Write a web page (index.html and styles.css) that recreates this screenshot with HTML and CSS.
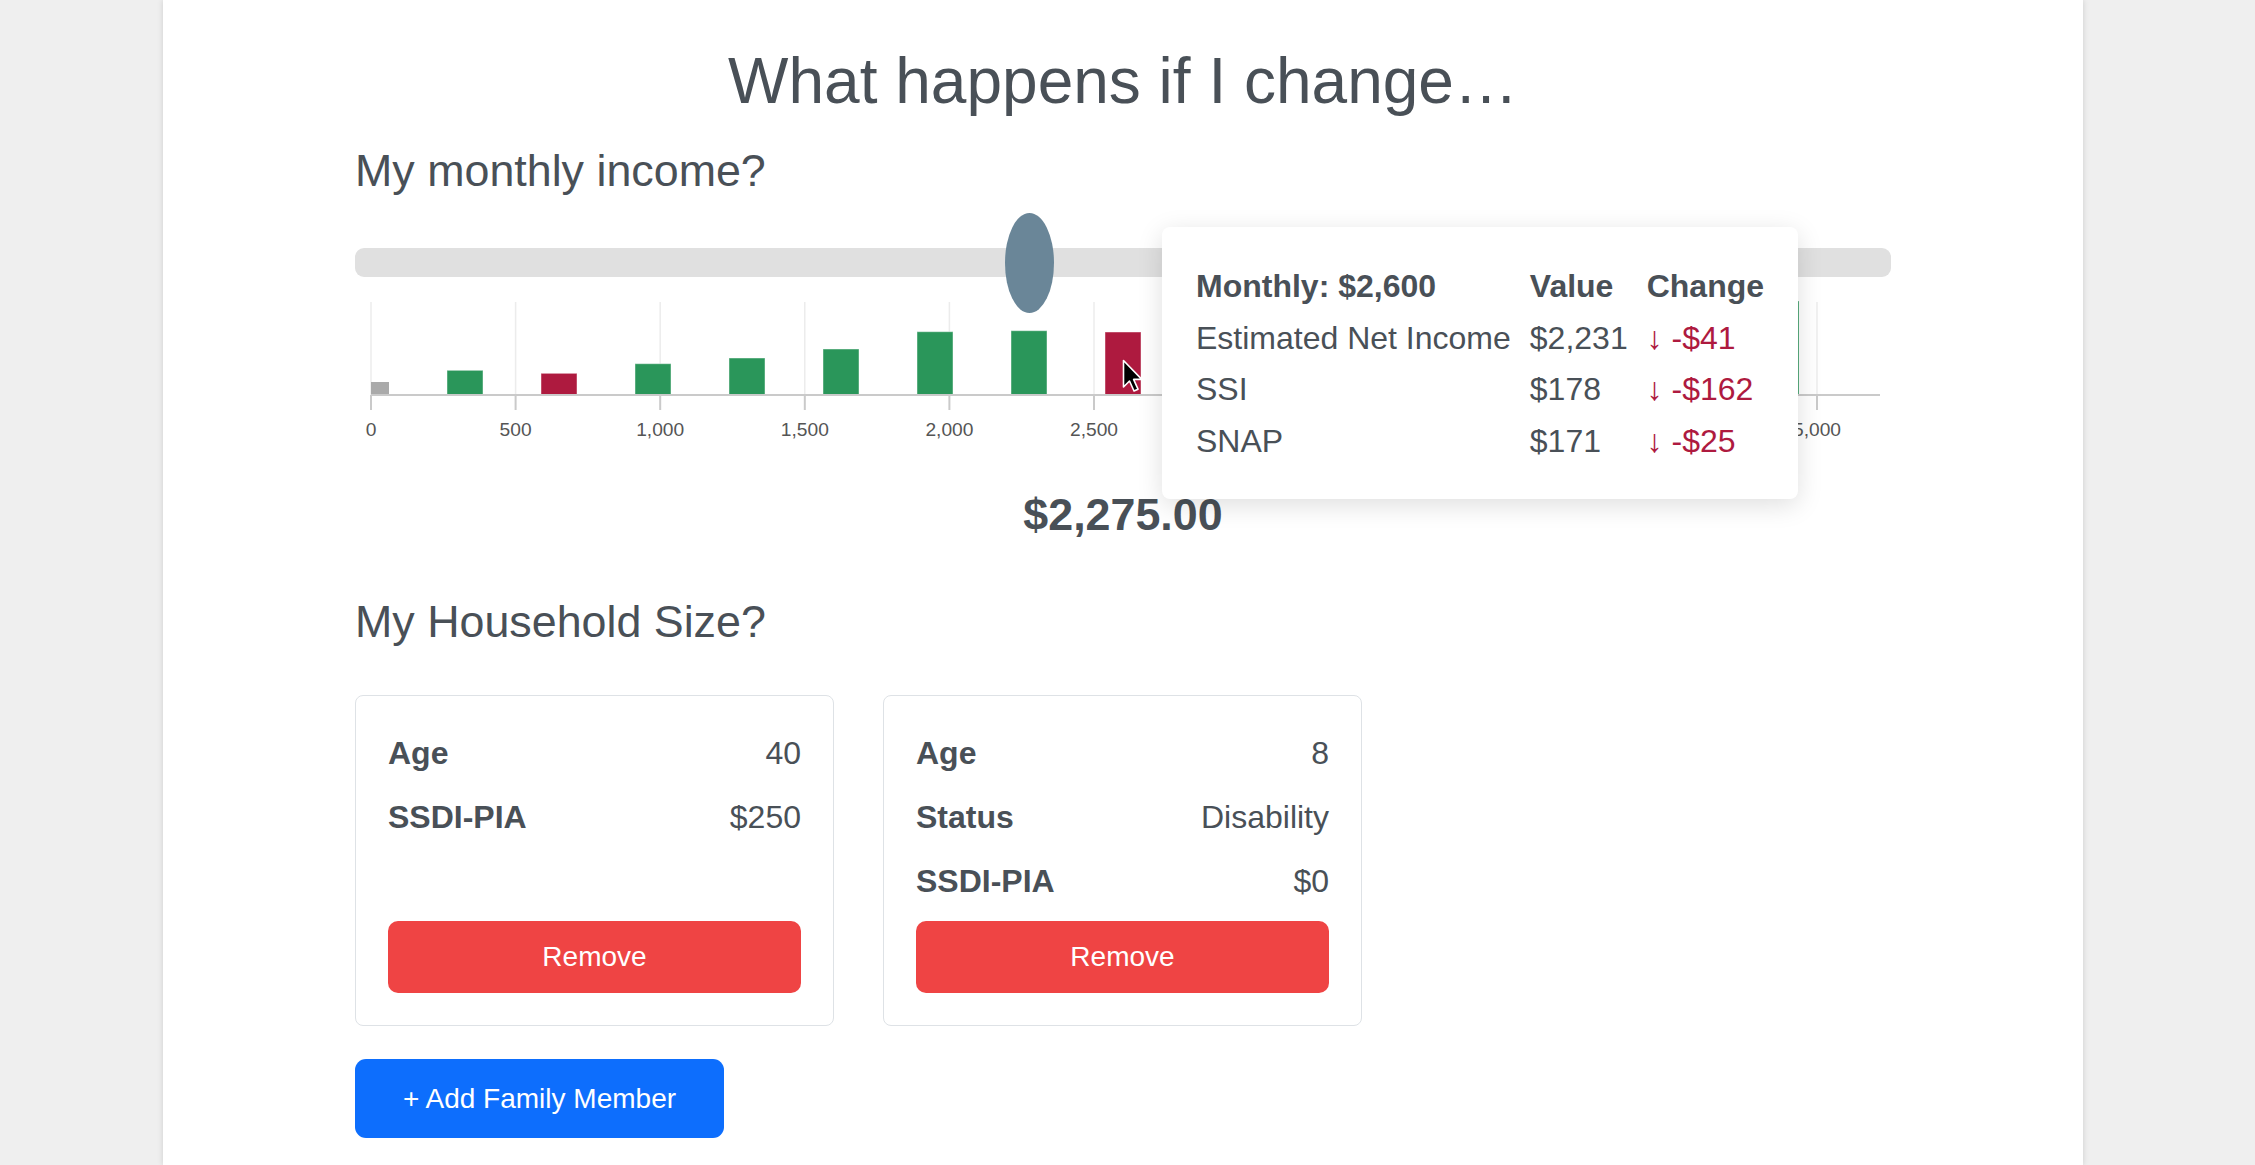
FILE: index.html
```html
<!DOCTYPE html>
<html lang="en">
<head>
<meta charset="utf-8">
<title>What happens if I change…</title>
<link rel="stylesheet" href="styles.css">
</head>
<body>
<main class="page">
  <h1 class="title">What happens if I change…</h1>

  <section class="income">
    <h2 class="section-title">My monthly income?</h2>
    <div class="widget">
      <div class="track"></div>
      <div class="thumb" style="left: 649.5px"></div>
      <svg class="chart" viewBox="0 0 1536 160" width="1536" height="160">
        <g class="grid">
          <line x1="16" y1="12" x2="16" y2="105"/>
          <line x1="160.6" y1="12" x2="160.6" y2="105"/>
          <line x1="305.2" y1="12" x2="305.2" y2="105"/>
          <line x1="449.8" y1="12" x2="449.8" y2="105"/>
          <line x1="594.4" y1="12" x2="594.4" y2="105"/>
          <line x1="739" y1="12" x2="739" y2="105"/>
          <line x1="883.6" y1="12" x2="883.6" y2="105"/>
          <line x1="1028.2" y1="12" x2="1028.2" y2="105"/>
          <line x1="1172.8" y1="12" x2="1172.8" y2="105"/>
          <line x1="1317.4" y1="12" x2="1317.4" y2="105"/>
          <line x1="1462" y1="12" x2="1462" y2="105"/>
        </g>
        <g class="ticks">
          <line x1="16" y1="105" x2="16" y2="120"/>
          <line x1="160.6" y1="105" x2="160.6" y2="120"/>
          <line x1="305.2" y1="105" x2="305.2" y2="120"/>
          <line x1="449.8" y1="105" x2="449.8" y2="120"/>
          <line x1="594.4" y1="105" x2="594.4" y2="120"/>
          <line x1="739" y1="105" x2="739" y2="120"/>
          <line x1="883.6" y1="105" x2="883.6" y2="120"/>
          <line x1="1028.2" y1="105" x2="1028.2" y2="120"/>
          <line x1="1172.8" y1="105" x2="1172.8" y2="120"/>
          <line x1="1317.4" y1="105" x2="1317.4" y2="120"/>
          <line x1="1462" y1="105" x2="1462" y2="120"/>
        </g>
        <g class="bars">
          <rect class="bar-none" x="16" y="92" width="18" height="13"/>
          <rect class="bar-up" x="92" y="80.3" width="36" height="24.7"/>
          <rect class="bar-down" x="186" y="83.3" width="36" height="21.7"/>
          <rect class="bar-up" x="280" y="73.7" width="36" height="31.3"/>
          <rect class="bar-up" x="374" y="68" width="36" height="37"/>
          <rect class="bar-up" x="468" y="59" width="36" height="46"/>
          <rect class="bar-up" x="562" y="41.7" width="36" height="63.3"/>
          <rect class="bar-up" x="656" y="40.7" width="36" height="64.3"/>
          <rect class="bar-down" x="750" y="42" width="36" height="63"/>
          <rect class="bar-up" x="844" y="35" width="36" height="70"/>
          <rect class="bar-up" x="938" y="31" width="36" height="74"/>
          <rect class="bar-up" x="1032" y="27" width="36" height="78"/>
          <rect class="bar-up" x="1126" y="23" width="36" height="82"/>
          <rect class="bar-up" x="1220" y="19" width="36" height="86"/>
          <rect class="bar-up" x="1314" y="15" width="36" height="90"/>
          <rect class="bar-up" x="1408" y="11" width="36" height="94"/>
        </g>
        <line class="axis" x1="16" y1="105" x2="1525" y2="105"/>
        <g class="labels">
          <text x="16" y="145.5">0</text>
          <text x="160.6" y="145.5">500</text>
          <text x="305.2" y="145.5">1,000</text>
          <text x="449.8" y="145.5">1,500</text>
          <text x="594.4" y="145.5">2,000</text>
          <text x="739" y="145.5">2,500</text>
          <text x="1462" y="145.5">5,000</text>
        </g>
      </svg>

      <div class="tooltip">
        <table class="tip-table">
          <thead>
            <tr><th>Monthly: $2,600</th><th>Value</th><th>Change</th></tr>
          </thead>
          <tbody>
            <tr><td>Estimated Net Income</td><td>$2,231</td><td class="down"><span class="arrow">↓</span> -$41</td></tr>
            <tr><td>SSI</td><td>$178</td><td class="down"><span class="arrow">↓</span> -$162</td></tr>
            <tr><td>SNAP</td><td>$171</td><td class="down"><span class="arrow">↓</span> -$25</td></tr>
          </tbody>
        </table>
      </div>

      <svg class="cursor" viewBox="0 0 24 36" width="24" height="36">
        <path d="M1.5 1.5 L1.5 28 L7.5 22 L12 32 L16 30.2 L11.6 20.4 L19.8 20.4 Z" fill="#000" stroke="#fff" stroke-width="1.6" stroke-linejoin="round"/>
      </svg>
    </div>
    <div class="income-value">$2,275.00</div>
  </section>

  <section class="household">
    <h2 class="section-title">My Household Size?</h2>
    <div class="members">
      <div class="member-card">
        <div class="member-row"><span class="label">Age</span><span class="value">40</span></div>
        <div class="member-row"><span class="label">SSDI-PIA</span><span class="value">$250</span></div>
        <button class="btn-remove" type="button">Remove</button>
      </div>
      <div class="member-card">
        <div class="member-row"><span class="label">Age</span><span class="value">8</span></div>
        <div class="member-row"><span class="label">Status</span><span class="value">Disability</span></div>
        <div class="member-row"><span class="label">SSDI-PIA</span><span class="value">$0</span></div>
        <button class="btn-remove" type="button">Remove</button>
      </div>
    </div>
    <button class="btn-add" type="button">+ Add Family Member</button>
  </section>
</main>
</body>
</html>
```

FILE: styles.css
```css
* {
  box-sizing: border-box;
}

html,
body {
  margin: 0;
  padding: 0;
}

body {
  background: #efefef;
  font-family: "Liberation Sans", Arial, Helvetica, sans-serif;
  color: #495057;
}

.page {
  width: 1920px;
  min-height: 1165px;
  margin-left: 163px;
  padding: 43px 192px 27px;
  background: #fff;
  box-shadow: 0 0 6px rgba(0, 0, 0, 0.14);
}

.title {
  margin: 0 0 23px;
  font-size: 64px;
  line-height: 77px;
  font-weight: 400;
  text-align: center;
}

.section-title {
  margin: 0;
  font-size: 44.8px;
  line-height: 54px;
  font-weight: 400;
}

/* ---------- income slider + chart ---------- */

.widget {
  position: relative;
  padding-top: 51px;
}

.track {
  height: 29px;
  border-radius: 9px;
  background: #e0e0e0;
}

.thumb {
  position: absolute;
  top: 15.7px;
  width: 49px;
  height: 100px;
  border-radius: 50%;
  background: #6a8698;
}

.chart {
  display: block;
  margin-top: 13px;
  width: 1536px;
  height: 160px;
}

.chart .grid line {
  stroke: #ececec;
  stroke-width: 1.5;
}

.chart .ticks line {
  stroke: #cacaca;
  stroke-width: 2;
}

.chart .axis {
  stroke: #cacaca;
  stroke-width: 2;
}

.chart .bar-up {
  fill: #2a965a;
  stroke: rgba(255, 255, 255, 0.45);
  stroke-width: 1;
}

.chart .bar-down {
  fill: #ae1a3f;
  stroke: rgba(255, 255, 255, 0.45);
  stroke-width: 1;
}

.chart .bar-none {
  fill: #aaaaaa;
}

.chart .labels text {
  font-family: "Liberation Sans", Arial, sans-serif;
  font-size: 19.2px;
  fill: #555;
  text-anchor: middle;
}

.tooltip {
  position: absolute;
  top: 30px;
  left: 807px;
  padding: 34px 24.5px 32px;
  background: #fff;
  border-radius: 8px;
  box-shadow: 0 6px 26px rgba(0, 0, 0, 0.13);
  white-space: nowrap;
}

.tip-table {
  border-collapse: collapse;
  border-spacing: 0;
  font-size: 32px;
  line-height: 51.5px;
}

.tip-table th,
.tip-table td {
  padding: 0 9.5px;
  text-align: left;
}

.tip-table th {
  font-weight: 700;
}

.tip-table .down {
  color: #ae1a3f;
}

.cursor {
  position: absolute;
  top: 162px;
  left: 766.5px;
}

.income-value {
  margin-top: 37.4px;
  font-size: 44.8px;
  line-height: 54px;
  font-weight: 700;
  text-align: center;
}

/* ---------- household ---------- */

.household .section-title {
  margin-top: 53px;
}

.members {
  display: grid;
  grid-template-columns: 479px 479px;
  column-gap: 49px;
  margin-top: 46.6px;
  align-items: stretch;
}

.member-card {
  display: flex;
  flex-direction: column;
  padding: 33.5px 32px 32px;
  border: 1.5px solid #dee2e6;
  border-radius: 8px;
  background: #fff;
}

.member-row {
  display: flex;
  justify-content: space-between;
  font-size: 32px;
  line-height: 48px;
  margin-bottom: 16px;
}

.member-row .label {
  font-weight: 700;
}

.btn-remove {
  margin-top: auto;
  height: 72px;
  border: 0;
  border-radius: 10px;
  background: #ef4444;
  color: #fff;
  font-family: "Liberation Sans", Arial, sans-serif;
  font-size: 28px;
}

.btn-add {
  display: block;
  margin-top: 33px;
  width: 369px;
  height: 79px;
  border: 0;
  border-radius: 11px;
  background: #0d6efd;
  color: #fff;
  font-family: "Liberation Sans", Arial, sans-serif;
  font-size: 28px;
}
```
